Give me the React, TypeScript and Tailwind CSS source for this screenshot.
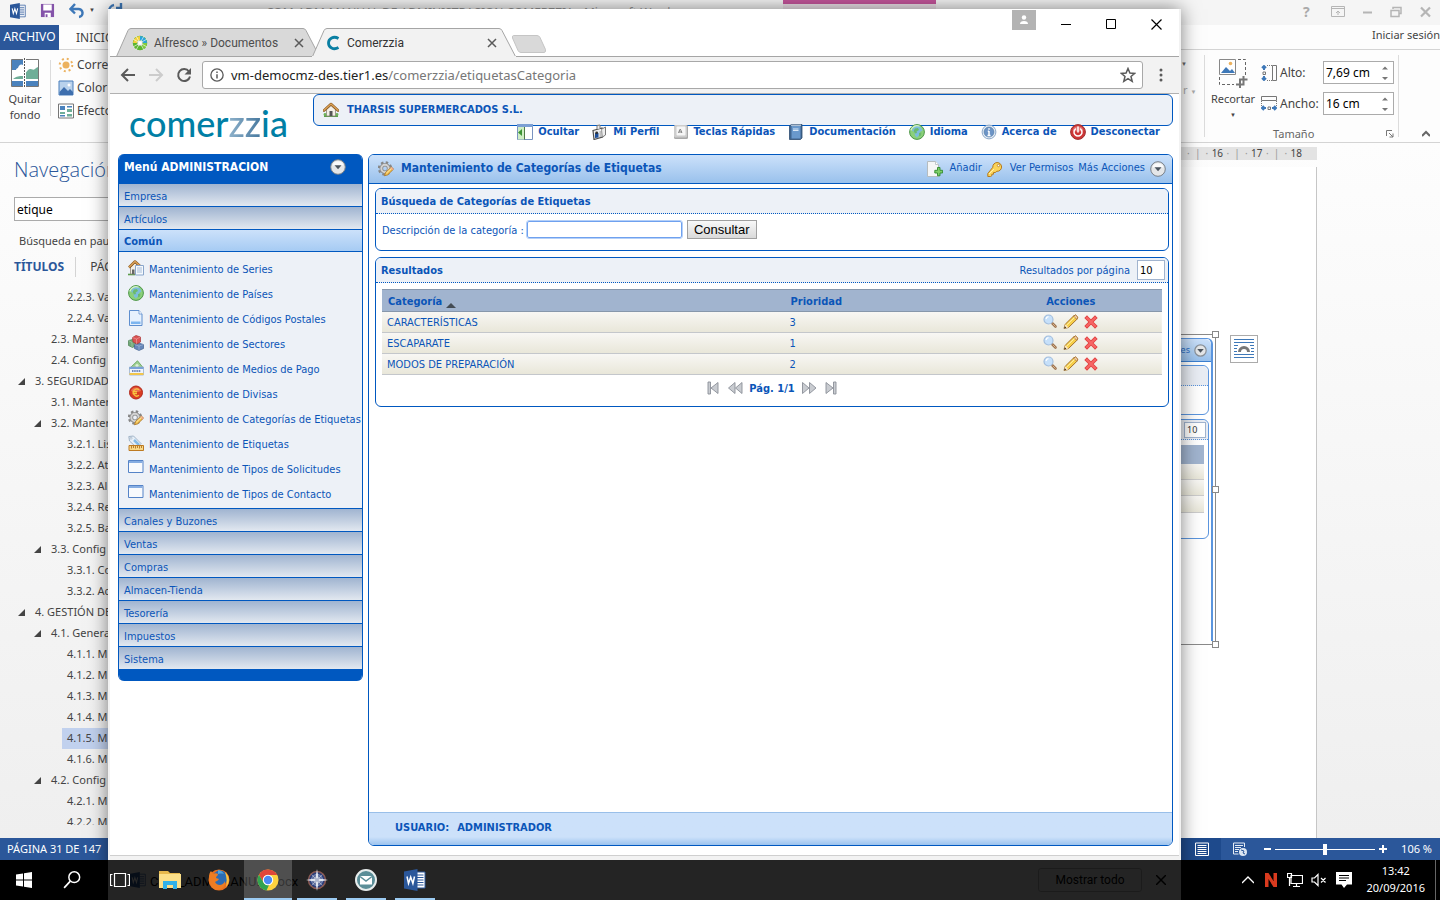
import type { ReactNode } from "react";

type IconProps = { size?: string; box?: string; children: ReactNode };

function Svg({ size = "size-4", box = "0 0 16 16", children }: IconProps) {
  return (
    <svg viewBox={box} className={`${size} shrink-0`} fill="none" aria-hidden="true">
      {children}
    </svg>
  );
}

/* ---------- Application icons ---------- */

const House = () => (
  <Svg>
    <path d="M1 14h14" stroke="#5b9c4a" strokeWidth="2" />
    <path d="M3.500 7.500 8 3.500l4.500 4V14h-9z" fill="#f3efe6" stroke="#8c8478" strokeWidth=".8" />
    <path d="M6.500 9h3v5h-3z" fill="#555" />
    <path d="M1 8.500 8 2l7 6.500" stroke="#8a5a22" strokeWidth="2.600" strokeLinecap="round" strokeLinejoin="round" />
    <path d="M1 8.300 8 2l7 6.300" stroke="#dca258" strokeWidth="1.300" strokeLinecap="round" strokeLinejoin="round" />
    <circle cx="2" cy="12.500" r="1.400" fill="#6fb35c" />
    <circle cx="14" cy="12.500" r="1.400" fill="#6fb35c" />
  </Svg>
);
const HouseDoc = () => (
  <Svg>
    <path d="M0 14.500h7" stroke="#5b9c4a" strokeWidth="1.600" />
    <path d="M2.500 7 7 3l4 4v7h-8.500z" fill="#f3efe6" stroke="#8c8478" strokeWidth=".8" />
    <path d="M4 9.500h2.500V14H4z" fill="#666" />
    <path d="M1 7.500 7 1.500l6.500 6" stroke="#8a5a22" strokeWidth="2.600" strokeLinejoin="round" />
    <path d="M1 7.300 7 1.500l6.500 5.800" stroke="#dca258" strokeWidth="1.300" />
    <path d="M7.500 5.500h8v9.500h-8z" fill="#f6f9fd" stroke="#8aa6cb" />
    <path d="M9 8h5M9 10h5M9 12h5" stroke="#9cb4d4" strokeWidth=".9" />
  </Svg>
);
const Globe = () => (
  <Svg>
    <circle cx="8" cy="8" r="7.400" fill="#8ad07a" stroke="#4d9647" />
    <path d="M5 3c2-1.500 5-1.500 7 .5l1.500 3-2 1-1 3-2.500 3-2-2-.5-3-2.500-2z" fill="#7cbcdc" />
    <path d="M6 4.500 9 4l1 2-2.500 1.500L8 9l-2 .5-1.500-2.500zM10 9l2.500-.5-.5 3-2 1z" fill="#6cba6c" />
    <path d="M2 6a6.300 6.300 0 0 1 8-4" stroke="#d5f1ca" strokeWidth="1.300" strokeLinecap="round" />
  </Svg>
);
const Page = () => (
  <Svg>
    <path d="M1.500.5H11L14 4v11.500H1.500z" fill="#e7f1fd" stroke="#5f8fcf" />
    <path d="M11 .5V4h3" fill="#fff" stroke="#5f8fcf" strokeWidth=".8" />
    <path d="M3 11.500h9.500v2.500H3z" fill="#7db5ef" />
  </Svg>
);
const Cubes = () => (
  <Svg>
    <path d="m.5 5.500 4-1 3 1.500v5l-3 1.500-4-2z" fill="#71a878" stroke="#477c50" strokeWidth=".7" />
    <path d="m6.500 9.500 4-1.500 5 1.500v4L11 15.500l-4.500-2z" fill="#6687ba" stroke="#41608f" strokeWidth=".7" />
    <path d="m4.500 2.500 3.500-2 4.500 1.500v5L9 9 5 7z" fill="#dc5454" stroke="#a93333" strokeWidth=".7" />
    <path d="m4.500 2.500 4 1.500 4-2M8.500 4v5M.5 5.500l3.500 2V12M11 11v4.500M6.500 9.500 11 11l4.500-1.500" stroke="#fff" strokeOpacity=".35" strokeWidth=".8" />
  </Svg>
);
const Payment = () => (
  <Svg>
    <path d="M1 9 9.500.8 15 7.500z" fill="#9fd092" stroke="#5d9f52" strokeWidth=".8" />
    <circle cx="9" cy="5.500" r="1.600" fill="#dcf0d5" />
    <path d="M1.500 7h14v8h-14z" fill="#eef3fb" stroke="#9bb0cd" strokeWidth=".8" />
    <path d="M1.500 7h14v2h-14z" fill="#7ba2d8" />
    <path d="M1.500 13h14v2h-14z" fill="#f2c64c" />
    <path d="M4 11h9" stroke="#4a68a8" strokeWidth="1.500" strokeDasharray="1.500 .7" />
  </Svg>
);
const Euro = () => (
  <Svg>
    <circle cx="8" cy="7.500" r="6.500" fill="#da3c22" stroke="#b2281a" />
    <path d="M3 6a5.300 5.300 0 0 1 10 0c-3 1.500-7 1.500-10 0z" fill="#f08a66" opacity=".7" />
    <path d="M11 4.800A3.500 3.500 0 1 0 11 10.300M4.500 6.700h4.500M4.500 8.500h4.500" stroke="#f8c440" strokeWidth="1.300" />
  </Svg>
);
const GearPencil = () => (
  <Svg>
    <circle cx="7" cy="7.500" r="5.700" stroke="#868686" strokeWidth="3" strokeDasharray="2.300 2.177" />
    <circle cx="7" cy="7.500" r="3.700" stroke="#8c8c8c" strokeWidth="3.600" />
    <circle cx="7" cy="7.500" r="3.700" stroke="#d2d2d2" strokeWidth="2" />
    <path d="m6.500 14.800 1-3.300 6-5.500 2 2.200-6 5.700z" fill="#f4c454" stroke="#a97425" strokeWidth=".8" />
    <path d="m13.500 6 2 2.200-1.200 1-2-2.200z" fill="#f0a08e" />
    <path d="m8.500 12 5-4.700" stroke="#fdeaa8" />
  </Svg>
);
const TagRuler = () => (
  <Svg>
    <path d="M.8 1.500 5.500 1l7.500 7.500-4 4.500L1.500 6z" fill="#e6eff8" stroke="#8fa4bb" strokeWidth=".8" />
    <circle cx="3" cy="3.200" r="1" fill="#fff" stroke="#8fa4bb" strokeWidth=".6" />
    <path d="m6 5 5 5" stroke="#84bbe8" strokeWidth="2.500" />
    <path d="M1 10.500h14.500v5H1z" fill="#f8d888" stroke="#bd7a22" />
    <path d="M3.500 11v2.500M5.500 11v2M7.500 11v2.500M9.500 11v2M11.500 11v2.500M13.500 11v2" stroke="#a8681a" strokeWidth=".8" />
  </Svg>
);
const WindowIcon = () => (
  <Svg>
    <path d="M.5.500h14.500v12H.5z" fill="#f8fafd" stroke="#5583c7" />
    <path d="M1 1h13.500v2H1z" fill="#86ade2" />
  </Svg>
);
const HidePane = () => (
  <Svg>
    <path d="M.5.5h15v15H.5z" fill="#fff" stroke="#7a93c0" />
    <path d="M0 0h16v3H0z" fill="#7b9fd4" />
    <path d="M1 3h6v12.500H1z" fill="#cfeec5" />
    <path d="M7.500 3v12.500" stroke="#4f7a46" />
    <path d="M1 8.500 5 5v7z" fill="#3c9435" />
  </Svg>
);
const Profile = () => (
  <Svg>
    <path d="M1 6.500 10 4l.5 9L2 15.500z" fill="#f1f1f1" stroke="#4e4e4e" strokeWidth="1.200" />
    <path d="M3 9h3.500v4.500L3 14z" fill="#1d4f9a" />
    <circle cx="4.700" cy="8.800" r="1.400" fill="#333" />
    <path d="M7.500 8h2M7.500 10h2M7.500 12h2" stroke="#777" strokeWidth=".8" />
    <path d="M5 5V1.500L8 1v3.500M10 5l3.500-2v8l-3 2" fill="#eee" stroke="#777" />
  </Svg>
);
const KeyCap = () => (
  <Svg>
    <rect x="1" y="1" width="14" height="14" rx="1.500" fill="#a9a9a9" />
    <rect x="1" y="1" width="13" height="12.500" rx="1.500" fill="#cdcdcd" />
    <rect x="3.500" y="2.500" width="9" height="9" rx="1" fill="#f6f6f6" />
    <path d="M5.500 9 6.800 5.500h.8L8.900 9M6 8h2.500" stroke="#666" strokeWidth=".8" />
  </Svg>
);
const Book = () => (
  <Svg>
    <path d="M1.500 2 3 .5h11v13.500l-1.500 1.500h-11z" fill="#3f658f" stroke="#2f4d70" strokeWidth=".8" />
    <path d="M3.500 2h9v12.500h-9z" fill="#6a99cc" />
    <path d="M5 5h5.500M5 6.500h5.500" stroke="#dce9f7" />
    <path d="M3 1.200h10" stroke="#dfe9f4" />
  </Svg>
);
const Info = () => (
  <Svg>
    <circle cx="8" cy="8" r="6.900" fill="#e8eff7" stroke="#8ba7c8" />
    <circle cx="8" cy="8" r="5" fill="#6c94c6" stroke="#51799f" strokeWidth=".6" />
    <path d="M8 4.300v1.500M8 7v4.500M6.800 7.300H8M6.500 11.500h3" stroke="#fff" strokeWidth="1.500" />
  </Svg>
);
const Power = () => (
  <Svg>
    <circle cx="8" cy="8" r="7.400" fill="#ce3636" stroke="#9f3030" />
    <path d="M2.500 6.500a5.700 5.700 0 0 1 11 0c-3 1.500-8 1.500-11 0z" fill="#e98a8a" opacity=".7" />
    <path d="M5.500 5a4 4 0 1 0 5 0M8 3v5" stroke="#fff" strokeWidth="1.500" strokeLinecap="round" />
  </Svg>
);
const AddPage = () => (
  <Svg>
    <path d="M.5.500h8L11.500 3.500v12H.5z" fill="#f5f6f6" stroke="#b5bcbf" />
    <path d="M8.500.5v3h3" fill="#fff" stroke="#b5bcbf" strokeWidth=".8" />
    <path d="M10.500 6.500h2.500v2.800h2.600v2.700H13v2.800h-2.500V12H7.800V9.300h2.700z" fill="#7ecf68" stroke="#2f8a2e" strokeWidth=".9" />
  </Svg>
);
const Key = () => (
  <Svg>
    <path d="M5.800 6.300a4.400 4.400 0 1 1 4 4L8.300 11.500H6.500v1.700H4.800v1.600L3.500 15.500H.8V12.500z" fill="#fbd45a" stroke="#b47a1e" strokeLinejoin="round" />
    <circle cx="11.500" cy="4.500" r="1.200" fill="#fff" stroke="#b47a1e" strokeWidth=".8" />
    <path d="M2 13 7 8" stroke="#fff0b0" />
  </Svg>
);
const DropCircle = () => (
  <Svg>
    <circle cx="8" cy="8" r="7.300" fill="#e4e6e8" stroke="#777f88" />
    <path d="M2.500 6.500a5.700 5.700 0 0 1 11 0z" fill="#fff" opacity=".8" />
    <path d="M4.500 6.200h7L8 10.300z" fill="#4b545e" />
  </Svg>
);
const Magnifier = () => (
  <Svg>
    <path d="m9.500 9.500 3 3" stroke="#9b7350" strokeWidth="2.600" strokeLinecap="round" />
    <path d="m10 10 2.300 2.300" stroke="#dcb58c" strokeLinecap="round" />
    <circle cx="5.500" cy="5.500" r="4.500" fill="#c6e0fa" stroke="#a3bedd" strokeWidth="1.200" />
    <path d="M3 5A3 3 0 0 1 5.500 2.700" stroke="#fff" strokeWidth="1.200" />
  </Svg>
);
const Pencil = () => (
  <Svg>
    <path d="m1 14.500 1.200-4.200L10.500 2l2-1 2.300 2.200-1 2.200L5.500 13.500z" fill="#f6cf4a" stroke="#9b6722" strokeWidth=".9" strokeLinejoin="round" />
    <path d="m10.500 2 2-1 2.300 2.200-1 2.200z" fill="#f6cfae" stroke="#9b6722" strokeWidth=".7" />
    <path d="m1 14.500 1.200-4.200L5.500 13.500z" fill="#fbe6c4" />
    <path d="m1 14.500.8-2.200 1.500 1.500z" fill="#3b2b16" />
    <path d="m3.500 11.200 8-7.800" stroke="#fff3b4" />
  </Svg>
);
const Cross = () => (
  <Svg>
    <path d="m4 4 8 8M12 4l-8 8" stroke="#e04040" strokeWidth="3.800" strokeLinecap="square" />
    <path d="m4 4 8 8M12 4l-8 8" stroke="#f76565" strokeWidth="2.200" strokeLinecap="square" />
  </Svg>
);
const pagePaths = {
  first: "M3 2h2.500v12H3zM13 2.500v11L6 8z",
  prev: "M8 2.500v11L1.500 8zM15 2.500v11L8.500 8z",
  next: "M1.500 2.500v11L8 8zM8.500 2.500v11L15 8z",
  last: "M10.500 2H13v12h-2.500zM3 2.500v11L10 8z",
};
const PageArrow = ({ kind }: { kind: keyof typeof pagePaths }) => (
  <Svg>
    <path d={pagePaths[kind]} fill="#c9ccd1" stroke="#8a8f97" strokeWidth=".9" />
  </Svg>
);

/* ---------- Word window ---------- */

const WordLogo = ({ size }: { size: string }) => (
  <Svg size={size} box="0 0 22 22">
    <path d="M12 3h9v16h-9z" fill="#fff" stroke="#2b579a" />
    <path d="M13 6h6.500M13 8.500h6.500M13 11h6.500M13 13.500h6.500M13 16h6.500" stroke="#2b579a" />
    <path d="M0 2.500 13.500 0v22L0 19.500z" fill="#2b579a" />
    <path d="m3 7.500 1.500 7L6.700 8l2.200 6.500 1.600-7" stroke="#fff" strokeWidth="1.500" />
  </Svg>
);

type OutlineNode = { level: 1 | 2 | 3; text: string; open?: boolean; current?: boolean };
const outline: OutlineNode[] = [
  { level: 3, text: "2.2.3. Va" },
  { level: 3, text: "2.2.4. Va" },
  { level: 2, text: "2.3. Manter" },
  { level: 2, text: "2.4. Config" },
  { level: 1, text: "3. SEGURIDAD", open: true },
  { level: 2, text: "3.1. Manter" },
  { level: 2, text: "3.2. Manter", open: true },
  { level: 3, text: "3.2.1. Lis" },
  { level: 3, text: "3.2.2. At" },
  { level: 3, text: "3.2.3. Al" },
  { level: 3, text: "3.2.4. Re" },
  { level: 3, text: "3.2.5. Ba" },
  { level: 2, text: "3.3. Config", open: true },
  { level: 3, text: "3.3.1. Co" },
  { level: 3, text: "3.3.2. Ac" },
  { level: 1, text: "4. GESTIÓN DE", open: true },
  { level: 2, text: "4.1. Genera", open: true },
  { level: 3, text: "4.1.1. M" },
  { level: 3, text: "4.1.2. M" },
  { level: 3, text: "4.1.3. M" },
  { level: 3, text: "4.1.4. M" },
  { level: 3, text: "4.1.5. M", current: true },
  { level: 3, text: "4.1.6. M" },
  { level: 2, text: "4.2. Config", open: true },
  { level: 3, text: "4.2.1. M" },
  { level: 3, text: "4.2.2. M" },
];
const indent = { 1: "ml-4", 2: "ml-8", 3: "ml-12" };

function SizeField({ id, label, value, icon }: { id: string; label: string; value: string; icon: ReactNode }) {
  return (
    <div className="flex h-[23px] items-center">
      {icon}
      <label htmlFor={id} className="ml-[3px] w-[43px]">{label}</label>
      <div className="flex h-[23px] w-[71px] items-center border border-[#ababab] bg-white pr-1">
        <input id={id} defaultValue={value} className="w-full min-w-0 bg-transparent pl-[2px] text-black outline-none" />
        <Svg size="h-4 w-2" box="0 0 8 16">
          <path d="M1 4.500 4 1.500l3 3zM1 12l3 3 3-3z" fill="#777" />
        </Svg>
      </div>
    </div>
  );
}

const RulerTicks = () => <span className="w-7 text-center whitespace-nowrap text-[#999]">·&nbsp;&nbsp;|&nbsp;&nbsp;·</span>;

function WordWindow() {
  return (
    <div className="flex h-[calc(100%-40px)] flex-col overflow-hidden bg-[#fdfdfd] text-[11px] text-[#444]">
      <div className="relative flex h-[25px] shrink-0 items-center justify-between bg-[#f5f5f5] pr-[7px] pb-1 pl-[10px]">
        <div className="flex items-center">
          <WordLogo size="size-4" />
          <Svg size="ml-[14px] h-[15px] w-[15px]">
            <path d="M1 1h14v14H1z" fill="#8453a9" />
            <path d="M3.500 1.500h9V8h-9zM5 10.500h6.500v4.500H5z" fill="#fff" />
            <path d="M6 12h2v3H6z" fill="#8453a9" />
          </Svg>
          <Svg size="ml-[14px] size-4">
            <path d="M2 6h7a4 4 0 0 1 1 8M6 1 1.500 6 6 10.500" stroke="#3e78b8" strokeWidth="2.400" />
          </Svg>
          <span className="ml-[4px] text-[6px]">▼</span>
          <Svg size="ml-[12px] size-4">
            <path d="M7 2a6 6 0 1 0 7 7M9 5h5V0" stroke="#3e78b8" strokeWidth="2.400" />
          </Svg>
        </div>
        <p className="absolute top-1 left-[266px] text-[12px] text-[#999]">COM-ADM-MANUAL DE ADMINISTRACION COMERZZIA - Microsoft Word</p>
        <div className="absolute top-0 left-[783px] h-[25px] w-[153px] border-t-4 border-[#c4549b] bg-[#eee2ea]" />
        <div className="flex items-center gap-[13px] pt-[2px] text-[#aaa]">
          <b className="w-[14px] text-[14px] leading-4">?</b>
          <Svg><path d="M1.500 2.500h13v10h-13zM1.500 4.500h13M8 11V7M6 9l2-2 2 2" stroke="#b5b5b5" /></Svg>
          <Svg><path d="M4 8.500h9" stroke="#b5b5b5" strokeWidth="2" /></Svg>
          <Svg><path d="M5 5V3.500h8v6h-2M3 6.500h8v6H3z" stroke="#b5b5b5" strokeWidth="1.500" /></Svg>
          <Svg><path d="m4 3.500 9 9M13 3.500l-9 9" stroke="#b5b5b5" strokeWidth="2.200" /></Svg>
        </div>
      </div>
      <div className="flex h-[25px] shrink-0 items-center border-b border-[#d4d4d4]">
        <button className="flex h-[25px] w-[59px] items-center justify-center bg-[#2b579a] text-[12px] text-white">ARCHIVO</button>
        <button className="ml-[17px] pt-px text-[12px]">INICIO</button>
        <a href="#sesion" className="ml-auto pb-1 text-[11px] whitespace-nowrap">Iniciar sesión</a>
      </div>
      <div className="flex h-[93px] shrink-0 justify-between border-b border-[#d4d4d4]">
        <div className="flex">
          <button className="flex w-[50px] flex-col items-center pt-[8px] text-[11px] leading-4">
            <Svg size="size-[30px] mb-[3px]" box="0 0 30 30">
              <path d="M1.500 1.500h27v27h-27z" fill="#fff" stroke="#777" />
              <path d="M2 2h12v6c-3-3-5-1-6 2-1 0-2 1-2 2H2zM2 23h26v5H2z" fill="#4a82bd" />
              <path d="M3 21c4-3 6-3 10-3l5-6c3-3 5 2 8-2l2-1v12z" fill="#6fae98" />
              <path d="M14.500 0v30" stroke="#fff" strokeWidth="3" />
              <path d="M14.500 0v30" stroke="#555" strokeDasharray="2 1" />
            </Svg>
            Quitar
            <span>fondo</span>
          </button>
          <div className="mt-[10px] h-[56px] w-px bg-[#dcdcdc]" />
          <div className="flex flex-col gap-[7px] pt-[7px] pl-[7px] text-[12px] leading-4">
            <button className="flex items-center gap-[3px]">
              <Svg>
                <circle cx="8" cy="8" r="3.500" fill="#ecb25f" />
                <circle cx="8" cy="8" r="6.300" stroke="#ecb25f" strokeWidth="2" strokeDasharray="2 2.950" />
              </Svg>
              Correc
            </button>
            <button className="flex items-center gap-[3px]">
              <Svg><path d="M1 1h14v14H1z" fill="#b9d2ec" stroke="#4a7ebb" /><path d="M1.500 12 6 7l4 4 2-2 3 3v3H1.500z" fill="#3e6fae" /><circle cx="11" cy="5" r="1.500" fill="#fff" /></Svg>
              Color
            </button>
            <button className="flex items-center gap-[3px]">
              <Svg><path d="M.5 1h15v14H.5z" fill="#fff" stroke="#777" /><path d="M2 3h5v4H2zM9 3h5v1.500H9zM2 12h5v1.500H2z" fill="#4a82bd" /><path d="M9 6h5v3H9zM2 9h5v2H2zM9 11h5v2.500H9z" fill="#6fae98" /></Svg>
              Efectos
            </button>
          </div>
        </div>
        <div className="flex">
          <div className="flex w-[24px] flex-col gap-[10px] pt-[6px] text-[11px] leading-4 text-[#aaa]">
            <span className="pl-px text-[6px] text-[#666]">▼</span>
            <span className="pl-[3px] whitespace-nowrap">r <span className="text-[6px]">▼</span></span>
          </div>
          <div className="my-[5px] w-px bg-[#dcdcdc]" />
          <button className="flex w-[56px] flex-col items-center pt-[7px] text-[11px] leading-4">
            <Svg size="size-8 mb-[2px]" box="0 0 32 32">
              <path d="M2.500 2.500h16v15h-16z" fill="#fff" stroke="#888" />
              <path d="m4 16 5-6 4 4 2-2 3 4z" fill="#3e78b8" />
              <circle cx="13.500" cy="6.500" r="1.800" fill="#ecb25f" />
              <path d="M21 2.500h7.500V18M2.500 20v7.500H17" stroke="#666" strokeDasharray="3 2" />
              <path d="M26.500 19v8.500H19M30.500 22.500h-7.500V31" stroke="#777" strokeWidth="2" />
            </Svg>
            Recortar
            <span className="text-[6px] leading-4">▼</span>
          </button>
          <div className="flex w-[137px] flex-col text-[12px]">
            <div className="flex flex-col gap-2 pt-[11px]">
              <SizeField id="alto" label="Alto:" value="7,69 cm" icon={<Svg><path d="M3 5V1M1 3l2-2 2 2M3 11v4M1 13l2 2 2-2" stroke="#3e78b8" strokeWidth="2" /><path d="M2 7h2.500v2.500H2zM11.500.5h4v15h-4z" stroke="#777" /><path d="M6 .5h5M6 15.500h5" stroke="#777" strokeDasharray="1 1" /></Svg>} />
              <SizeField id="ancho" label="Ancho:" value="16 cm" icon={<Svg><path d="M5 12H1M3 10l-2 2 2 2M11 12h4M13 10l2 2-2 2" stroke="#3e78b8" strokeWidth="2" /><path d="M7 11h2.500v2.500H7zM.5.500h15v4H.5z" stroke="#777" /><path d="M.5 5v5M15.500 5v5" stroke="#777" strokeDasharray="1 1" /></Svg>} />
            </div>
            <div className="mt-[11px] flex items-center pl-3 text-[11px] leading-4 text-[#666]">
              Tamaño
              <Svg size="ml-auto mr-1 size-2" box="0 0 8 8"><path d="M.5 6V.5H6M3 3l4 4M7 3.500V7H3.500" stroke="#777" /></Svg>
            </div>
          </div>
          <div className="my-[5px] w-px bg-[#dcdcdc]" />
          <div className="flex w-[41px] items-end justify-center pb-1 pl-3">
            <Svg size="size-2" box="0 0 8 8"><path d="m0 6 4-4 4 4" stroke="#666" strokeWidth="2" /></Svg>
          </div>
        </div>
      </div>
      <div className="flex min-h-0 flex-1 bg-linear-to-b from-[#fdfdfd] to-[#efefef]">
        <div className="flex w-[130px] shrink-0 flex-col pb-[13px] pl-[14px]">
          <h2 className="mt-[11px] font-['Open_Sans','Noto_Sans',sans-serif] text-[20px] leading-8 font-light text-[#2b579a]">Navegación</h2>
          <input aria-label="Buscar en el documento" defaultValue="etique" className="mt-[11px] h-6 w-full shrink-0 border border-[#ababab] bg-white px-[2px] text-[12px] text-black" />
          <p className="mt-3 pl-[5px] leading-4 whitespace-nowrap">Búsqueda en pau</p>
          <div className="mt-[7px] flex h-[22px] shrink-0 items-center text-[12px]">
            <b className="text-[#2b579a]">TÍTULOS</b>
            <span className="ml-[11px] h-5 w-px bg-[#d4d4d4]" />
            <span className="ml-[14px]">PÁG</span>
          </div>
          <ul className="mt-[9px] min-h-0 flex-1 overflow-hidden">
            {outline.map((n) => (
              <li key={n.text} className={`relative flex h-[21px] items-center pl-[5px] text-[11px] whitespace-nowrap ${indent[n.level]} ${n.current ? "bg-[#c1d1ee]" : ""}`}>
                {n.open && (
                  <Svg size="absolute -left-3 size-2" box="0 0 8 8"><path d="M7 0v7H0z" fill="#444" /></Svg>
                )}
                {n.text}
              </li>
            ))}
          </ul>
        </div>
        <div className="flex min-w-0 flex-1 flex-col pr-[123px]">
          <div className="mt-1 flex h-[13px] shrink-0 items-center justify-end bg-[#e3e3e3] pr-[15px] text-[10px]">
            <RulerTicks />16<RulerTicks />17<RulerTicks />18
          </div>
          <div className="mt-[7px] flex min-h-0 flex-1 justify-end border-r border-[#c6c6c6] bg-white">
            <div className="relative mt-[167px] mr-[100px] h-[311px] w-[120px] border border-[#8a8a8a]">
              <div className="mr-[2px] mt-[3px] flex h-[303px] flex-col rounded-tr-md border-t border-r-2 border-[#5b95de]">
                <div className="flex h-[23px] items-center justify-end gap-1 rounded-tr-md border-b border-[#3b7fd0] bg-linear-to-b from-[#cce1fa] to-[#99c1ec] pr-1 text-[9px] text-[#2f6fc4]">
                  nes
                  <Svg size="size-[13px]"><circle cx="8" cy="8" r="7" fill="#e4e6e8" stroke="#8a9199" strokeWidth="1.500" /><path d="M4 6.200h8L8 10.800z" fill="#4b545e" /></Svg>
                </div>
                <div className="mt-[3px] mr-[2px] h-[50px] rounded-r-md border border-[#5b95de]">
                  <div className="h-5 rounded-tr-md border-b border-dotted border-[#5b95de] bg-[#e9edf4]" />
                </div>
                <div className="mt-1 mr-[2px] h-[120px] rounded-r-md border border-[#5b95de]">
                  <div className="flex h-5 items-center justify-end rounded-tr-md border-b border-dotted border-[#5b95de] bg-[#e9edf4] pr-[2px]">
                    <span className="h-4 w-[22px] border border-[#a1b4cf] bg-white pl-[2px] text-[9px] leading-[14px] text-[#333]">10</span>
                  </div>
                  <div className="mt-[5px] mr-1">
                    <div className="h-[19px] bg-[#a1b4cf]" />
                    <div className="h-4 border-b border-[#ccc] bg-linear-to-b from-[#f8f7f4] to-[#e8e6d8]" />
                    <div className="h-4 border-b border-[#ccc] bg-linear-to-b from-[#f8f7f4] to-[#e8e6d8]" />
                    <div className="h-[17px] border-b border-[#ccc] bg-linear-to-b from-[#f8f7f4] to-[#e8e6d8]" />
                  </div>
                </div>
              </div>
              <span className="absolute -top-1 -right-1 size-[7px] border border-[#888] bg-white" />
              <span className="absolute top-[151px] -right-1 size-[7px] border border-[#888] bg-white" />
              <span className="absolute -right-1 -bottom-1 size-[7px] border border-[#888] bg-white" />
              <button aria-label="Opciones de diseño" className="absolute top-0 -right-[43px] flex size-7 items-center justify-center border border-[#ababab] bg-white">
                <Svg size="size-5" box="0 0 20 20">
                  <path d="M0 .5h20M0 3.500h20M0 15.500h20M0 18.500h20M0 6.500h4M16 6.500h4M0 9.500h3M17 9.500h3M0 12.500h3M17 12.500h3" stroke="#3e78b8" />
                  <path d="M5.500 13a4.500 4.500 0 0 1 9 0" stroke="#777" strokeWidth="3" />
                </Svg>
              </button>
            </div>
          </div>
        </div>
      </div>
      <div className="flex h-[22px] shrink-0 items-center bg-[#2b579a] pl-[7px] text-white">
        <span>PÁGINA 31 DE 147</span>
        <div className="ml-auto flex h-full w-[260px] items-center">
          <span className="flex h-full w-[41px] items-center justify-center bg-[#1e4a8c] pl-[2px]">
            <Svg><path d="M1.500 2h13v12.500h-13zM3.500 4.500h9M3.500 6.500h9M3.500 8.500h9M3.500 10.500h9M3.500 12.500h9" stroke="#fff" /></Svg>
          </span>
          <span className="ml-[11px]">
            <Svg><path d="M12.500 6V2h-11v11h5M3 4.500h8M3 6.500h6M3 8.500h4M3 10.500h3" stroke="#e5ecf5" /><circle cx="11" cy="11" r="4" fill="#dce6f2" /><path d="m9 9 3 1-1 2 2 1" stroke="#2b579a" /></Svg>
          </span>
          <span className="ml-4 h-[2px] w-[7px] bg-white" />
          <div className="relative mx-1 flex h-3 w-[100px] items-center">
            <span className="absolute inset-x-0 h-px bg-white" />
            <input type="range" aria-label="Zoom" defaultValue="50" className="relative w-full appearance-none bg-transparent [&::-webkit-slider-thumb]:h-[11px] [&::-webkit-slider-thumb]:w-1 [&::-webkit-slider-thumb]:appearance-none [&::-webkit-slider-thumb]:bg-white" />
          </div>
          <Svg size="size-2" box="0 0 8 8"><path d="M0 4h8M4 0v8" stroke="#fff" strokeWidth="2" /></Svg>
          <span className="ml-auto pr-2">106 %</span>
        </div>
      </div>
    </div>
  );
}

/* ---------- Browser ---------- */

function TabShape({ active }: { active?: boolean }) {
  return (
    <svg viewBox="0 0 204 29" className="absolute inset-0 h-[29px] w-full" preserveAspectRatio="none" aria-hidden="true">
      <path d="M.5 28.500 12 2.500Q13 .5 15 .5H187Q189 .5 190 2.500L203.500 28.500" fill={active ? "#f2f2f2" : "#d9d9d9"} stroke="#a5a5a5" />
      <path d="M0 28.500h204" stroke={active ? "#f2f2f2" : "#a5a5a5"} />
    </svg>
  );
}

const TabClose = () => (
  <Svg size="size-[10px]" box="0 0 10 10"><path d="m1 1 8 8M9 1 1 9" stroke="#5a5a5a" strokeWidth="1.500" /></Svg>
);

function BrowserTop() {
  return (
    <>
      <div className="flex h-12 shrink-0 justify-between border-b border-[#a5a5a5] bg-white">
        <div className="-mb-px flex items-end pl-[6px] font-['Roboto',sans-serif] text-[12px] text-[#4d4d4d]">
          <button className="relative flex h-[29px] w-[204px] items-center pr-[16px] pl-4">
            <TabShape />
            <span className="relative flex w-full items-center">
              <Svg>
                <circle cx="8" cy="8" r="5" stroke="#5cb531" strokeWidth="4.500" />
                <path d="M3 8a5 5 0 0 1 5-5" stroke="#f4d23c" strokeWidth="4" />
                <path d="M8 3a5 5 0 0 1 5 5" stroke="#2aa4dc" strokeWidth="4" />
                <path d="M13 8a5 5 0 0 1-2 4" stroke="#86cc3c" strokeWidth="4" />
                <path d="m1 4 14 8M4 1l8 14M12 1 4 15M15 4 1 12" stroke="#fff" strokeWidth=".6" />
                <circle cx="8" cy="8" r="1.800" fill="#fff" />
              </Svg>
              <span className="ml-[6px]">Alfresco » Documentos</span>
              <span className="ml-auto"><TabClose /></span>
            </span>
          </button>
          <button className="relative -ml-2 flex h-[29px] w-[204px] items-center pr-[19px] pl-[14px] text-[#333]">
            <TabShape active />
            <span className="relative flex w-full items-center">
              <Svg><path d="M12.500 3.500C7.500.5 2.500 3.500 2.500 8s5 7.500 10 4.500" stroke="#0a7fa3" strokeWidth="2.800" /></Svg>
              <span className="ml-[5px]">Comerzzia</span>
              <span className="ml-auto"><TabClose /></span>
            </span>
          </button>
          <button aria-label="Nueva pestaña" className="mb-1 -ml-[5px]">
            <Svg size="h-[18px] w-9" box="0 0 36 18"><path d="M2.500.5H26Q28 .5 29 2.500l5.500 12Q35 17.500 33 17.500H10Q8 17.500 7 15.500L1.500 3Q1 .5 2.500.5z" fill="#d9d9d9" stroke="#c5c5c5" /></Svg>
          </button>
        </div>
        <div className="flex items-start">
          <button aria-label="Usuario" className="mt-px mr-[7px] flex h-5 w-6 items-center justify-center bg-[#b3b3b3]">
            <Svg size="size-[10px]" box="0 0 10 10"><circle cx="5" cy="2.500" r="2.200" fill="#fff" /><path d="M1 9q0-3 4-3t4 3z" fill="#fff" /></Svg>
          </button>
          <button aria-label="Minimizar" className="flex h-[30px] w-[45px] items-center justify-center"><Svg size="size-[10px]" box="0 0 10 10"><path d="M0 5.500h10" stroke="#000" /></Svg></button>
          <button aria-label="Maximizar" className="flex h-[30px] w-[46px] items-center justify-center"><Svg size="size-[10px]" box="0 0 10 10"><path d="M.5.500h9v9h-9z" stroke="#000" /></Svg></button>
          <button aria-label="Cerrar" className="flex h-[30px] w-[45px] items-center justify-center"><Svg size="size-[11px]" box="0 0 11 11"><path d="m.5.500 10 10M10.500.500l-10 10" stroke="#000" strokeWidth="1.200" /></Svg></button>
        </div>
      </div>
      <div className="flex h-[37px] shrink-0 items-center border-b border-[#b1b1b1] bg-[#f2f2f2] pr-[10px] pl-[10px]">
        <Svg size="size-4"><path d="M15 8H2M8 2 2 8l6 6" stroke="#5a5a5a" strokeWidth="2" /></Svg>
        <Svg size="ml-3 size-4"><path d="M1 8h13M8 2l6 6-6 6" stroke="#ccc" strokeWidth="2" /></Svg>
        <Svg size="ml-3 size-4"><path d="M13 4.500a6 6 0 1 0 1 5" stroke="#5a5a5a" strokeWidth="2" /><path d="M15 1v6.500H8.500z" fill="#5a5a5a" /></Svg>
        <div className="ml-[10px] flex h-7 flex-1 items-center rounded-[3px] border border-[#a8a8a8] bg-white pr-[6px] pl-[7px]">
          <Svg size="size-[14px]"><circle cx="8" cy="8" r="7" stroke="#5a5a5a" strokeWidth="1.500" /><path d="M8 4v1.800M8 7v5" stroke="#5a5a5a" strokeWidth="1.700" /></Svg>
          <span className="ml-[7px] pt-px text-[13px] text-[#777]"><span className="text-[#222]">vm-democmz-des.tier1.es</span>/comerzzia/etiquetasCategoria</span>
          <span className="ml-auto"><Svg><path d="m8 1.500 1.900 4.500 4.800.4-3.700 3.100 1.200 4.800L8 11.700l-4.200 2.600L5 9.500 1.300 6.400 6.100 6z" stroke="#5a5a5a" strokeWidth="1.500" /></Svg></span>
        </div>
        <Svg size="ml-[10px] size-4"><circle cx="8" cy="3" r="1.500" fill="#5a5a5a" /><circle cx="8" cy="8" r="1.500" fill="#5a5a5a" /><circle cx="8" cy="13" r="1.500" fill="#5a5a5a" /></Svg>
      </div>
    </>
  );
}

/* ---------- Comerzzia page ---------- */

const topLinks: [string, ReactNode][] = [
  ["Ocultar", <HidePane />],
  ["Mi Perfil", <Profile />],
  ["Teclas Rápidas", <KeyCap />],
  ["Documentación", <Book />],
  ["Idioma", <Globe />],
  ["Acerca de", <Info />],
  ["Desconectar", <Power />],
];

const comunItems: [string, ReactNode][] = [
  ["Mantenimiento de Series", <HouseDoc />],
  ["Mantenimiento de Países", <Globe />],
  ["Mantenimiento de Códigos Postales", <Page />],
  ["Mantenimiento de Sectores", <Cubes />],
  ["Mantenimiento de Medios de Pago", <Payment />],
  ["Mantenimiento de Divisas", <Euro />],
  ["Mantenimiento de Categorías de Etiquetas", <GearPencil />],
  ["Mantenimiento de Etiquetas", <TagRuler />],
  ["Mantenimiento de Tipos de Solicitudes", <WindowIcon />],
  ["Mantenimiento de Tipos de Contacto", <WindowIcon />],
];

const rows = [
  { name: "CARACTERÍSTICAS", priority: 3 },
  { name: "ESCAPARATE", priority: 1 },
  { name: "MODOS DE PREPARACIÓN", priority: 2 },
];

function MenuEntry({ label }: { label: string }) {
  return (
    <button className="flex h-[23px] w-full items-center border-b border-[#0058c0] bg-linear-to-b from-[#a0b4d0] to-[#e2e8f0] px-[5px] pt-1">
      {label}
    </button>
  );
}

function Sidebar() {
  return (
    <nav className="flex w-[245px] shrink-0 flex-col self-start overflow-hidden rounded-md border-x border-[#0058c0] bg-[#edf1f7]">
      <div className="flex h-[30px] items-center justify-between bg-[#0058c0] pr-4 pb-1 pl-[5px]">
        <h2 className="text-[12px] font-bold text-white">Menú ADMINISTRACION</h2>
        <button aria-label="Opciones del menú"><DropCircle /></button>
      </div>
      {["Empresa", "Artículos"].map((l) => <MenuEntry key={l} label={l} />)}
      <button className="flex h-[22px] items-center border-b border-[#0058c0] bg-linear-to-b from-[#cce1fa] to-[#a6cbf3] px-[5px] pt-1 font-bold">Común</button>
      <ul className="border-b border-[#0058c0] pt-1 pb-[2px]">
        {comunItems.map(([label, icon]) => (
          <li key={label} className="h-[25px]">
            <a href="#menu" className="flex h-full items-center gap-[5px] pb-px pl-[9px] whitespace-nowrap">
              {icon}
              <span className="pt-1">{label}</span>
            </a>
          </li>
        ))}
      </ul>
      {["Canales y Buzones", "Ventas", "Compras", "Almacen-Tienda", "Tesorería", "Impuestos", "Sistema"].map((l) => (
        <MenuEntry key={l} label={l} />
      ))}
      <div className="h-[11px] bg-[#0058c0]" />
    </nav>
  );
}

function ResultsTable() {
  return (
    <table className="w-full table-fixed border-separate border-spacing-0 text-left">
      <thead className="bg-[#a1b4cf]">
        <tr className="h-[23px]">
          <th className="w-[52%] border-y border-[#8797ab] pt-[3px] pl-[6px]">
            Categoría
            <Svg size="ml-1 inline h-[5px] w-[10px] align-text-bottom" box="0 0 10 5"><path d="M0 5 5 0l5 5z" fill="#444c55" /></Svg>
          </th>
          <th className="w-[32%] border-y border-[#8797ab] pt-[3px] pl-[3px]">Prioridad</th>
          <th className="border-y border-[#8797ab] pt-[3px] pl-[9px]">Acciones</th>
        </tr>
      </thead>
      <tbody>
        {rows.map((r) => (
          <tr key={r.name} className="h-[21px] bg-linear-to-b from-[#f8f7f4] to-[#e8e6d8]">
            <td className="border-b border-[#c4c7cb] pt-[2px] pl-[5px]">{r.name}</td>
            <td className="border-b border-[#c4c7cb] pt-[2px] pl-[2px]">{r.priority}</td>
            <td className="border-b border-[#c4c7cb] pl-[6px]">
              <div className="flex gap-1">
                <button aria-label="Ver"><Magnifier /></button>
                <button aria-label="Editar"><Pencil /></button>
                <button aria-label="Eliminar"><Cross /></button>
              </div>
            </td>
          </tr>
        ))}
      </tbody>
    </table>
  );
}

function MainPanel() {
  return (
    <main className="flex min-w-0 flex-1 flex-col overflow-hidden rounded-md border border-[#0058c0] bg-white">
      <div className="flex h-[29px] shrink-0 items-center border-b border-[#0058c0] bg-linear-to-b from-[#cce1fa] to-[#99c1ec] pr-[6px] pb-px pl-[9px]">
        <GearPencil />
        <h1 className="ml-[7px] pb-px text-[12px] font-bold">Mantenimiento de Categorías de Etiquetas</h1>
        <div className="ml-auto flex items-center gap-[5px]">
          <a href="#nuevo" className="flex items-center gap-[7px]"><AddPage />Añadir</a>
          <a href="#permisos" className="flex items-center gap-[7px]"><Key />Ver Permisos</a>
          <button className="flex items-center gap-[5px]">Más Acciones<DropCircle /></button>
        </div>
      </div>
      <div className="flex flex-1 flex-col gap-[6px] py-1 pr-[3px] pl-[6px]">
        <section className="overflow-hidden rounded-md border border-[#0058c0]">
          <h2 className="flex h-[25px] items-center border-b border-dotted border-[#0058c0] bg-[#edf1f7] pt-[2px] pl-[5px] font-bold">Búsqueda de Categorías de Etiquetas</h2>
          <form className="flex h-9 items-center pb-[5px] pl-[6px]" onSubmit={(e) => e.preventDefault()}>
            <label htmlFor="descripcion" className="pt-[3px]">Descripción de la categoría :</label>
            <input id="descripcion" className="ml-[3px] h-[17px] w-[155px] rounded-[2px] border border-[#6fa1ef] bg-white px-1 outline-1 outline-[#b5d0f8]" />
            <button className="ml-[5px] h-[19px] w-[70px] border border-[#a0a0a0] bg-linear-to-b from-[#f8f8f8] to-[#dadada] font-['Liberation_Sans',sans-serif] text-[13px] leading-4 text-black">Consultar</button>
          </form>
        </section>
        <section className="overflow-hidden rounded-md border border-[#0058c0]">
          <div className="flex h-[25px] items-center justify-between border-b border-dotted border-[#0058c0] bg-[#edf1f7] pr-[3px] pl-[5px]">
            <h2 className="pt-[2px] font-bold">Resultados</h2>
            <div className="flex items-center gap-[7px]">
              <label htmlFor="por-pagina" className="pt-[2px]">Resultados por página</label>
              <input id="por-pagina" defaultValue="10" className="h-5 w-7 border border-[#a1b4cf] bg-white px-[2px] text-black" />
            </div>
          </div>
          <div className="pt-[6px] pr-[6px] pl-[6px]">
            <ResultsTable />
          </div>
          <div className="flex h-[31px] items-center justify-center gap-[6px] pb-[5px] font-bold">
            <button aria-label="Primera página"><PageArrow kind="first" /></button>
            <button aria-label="Página anterior"><PageArrow kind="prev" /></button>
            <span className="pt-[2px]">Pág. 1/1</span>
            <button aria-label="Página siguiente"><PageArrow kind="next" /></button>
            <button aria-label="Última página"><PageArrow kind="last" /></button>
          </div>
        </section>
      </div>
      <div className="flex h-[33px] shrink-0 items-center gap-2 border-t border-[#99bfe9] bg-linear-to-b from-[#cce1fa] from-75% to-[#9cc3ee] pb-[2px] pl-[26px] font-bold">
        <span>USUARIO:</span>
        <span>ADMINISTRADOR</span>
      </div>
    </main>
  );
}

function BrowserWindow() {
  return (
    <div className="absolute top-[9px] right-[259px] bottom-0 left-[108px] flex flex-col border-x-2 border-[#f2f2f2] bg-white shadow-[0_0_18px_rgba(0,0,0,0.5)]">
      <BrowserTop />
      <div className="flex min-h-0 flex-1 flex-col pr-[6px] pb-[9px] pl-2 font-['DejaVu_Sans_Condensed','DejaVu_Sans',sans-serif] text-[11px] text-[#0b55b8]">
        <header className="flex h-[60px] shrink-0">
          <a href="#inicio" className="w-[195px] shrink-0 pt-2 pl-[11px] font-['Lato',sans-serif] text-[36px] leading-[42px] font-medium text-[#007fa5]">
            comer<span className="bg-linear-to-r from-[#8fb2cb] to-[#47799f] bg-clip-text text-transparent">zz</span>ia
          </a>
          <div className="min-w-0 flex-1">
            <div className="flex h-8 items-center gap-2 rounded-md border border-[#0058c0] bg-[#edf1f7] pl-[9px] font-bold">
              <House />
              THARSIS SUPERMERCADOS S.L.
            </div>
            <div className="relative -mt-[2px] flex justify-end gap-[13px] pr-[13px] font-bold">
              {topLinks.map(([label, icon]) => (
                <a key={label} href="#accion" className="flex items-center gap-[5px] whitespace-nowrap leading-4">
                  {icon}
                  {label}
                </a>
              ))}
            </div>
          </div>
        </header>
        <div className="flex min-h-0 flex-1 gap-[5px]">
          <Sidebar />
          <MainPanel />
        </div>
      </div>
      <div className="flex h-[45px] shrink-0 items-center border-t border-[#cfcfcf] bg-[#f2f2f2] pt-1 pr-[13px] pl-[20px] font-['Roboto',sans-serif] text-[13px] text-black">
        <WordLogo size="size-4" />
        <span className="ml-1 pt-1">COM_ADM_MANU....docx</span>
        <button className="ml-auto h-[24px] w-[104px] rounded-[3px] border border-[#b5b5b5] text-[12px]">Mostrar todo</button>
        <button aria-label="Cerrar descargas" className="ml-[14px]"><Svg size="size-[10px]" box="0 0 10 10"><path d="m0 0 10 10M10 0 0 10" stroke="#000" strokeWidth="1.500" /></Svg></button>
      </div>
    </div>
  );
}

/* ---------- Taskbar ---------- */

function TaskButton({ label, running, active, children }: { label: string; running?: boolean; active?: boolean; children: ReactNode }) {
  return (
    <button aria-label={label} className={`flex h-10 w-12 flex-col items-center ${active ? "bg-white/20" : ""}`}>
      <span className="flex h-[38px] items-center pt-[2px]">{children}</span>
      {running && <span className={`h-[2px] bg-[#9ccbf2] ${active ? "w-12" : "w-10"}`} />}
    </button>
  );
}

function Taskbar() {
  return (
    <div className="absolute inset-x-0 bottom-0 flex h-10 items-center justify-between bg-black/85 text-white">
      <div className="flex">
        <TaskButton label="Inicio"><Svg><path d="M0 2.500 7 1.500v6H0zM8 1.300 16 0v7.500H8zM0 8.500h7v6L0 13.500zM8 8.500h8V16l-8-1.300z" fill="#fff" /></Svg></TaskButton>
        <TaskButton label="Buscar"><Svg size="size-[18px]"><circle cx="10" cy="5.500" r="4.800" stroke="#fff" strokeWidth="1.300" /><path d="M6.500 9 1 15" stroke="#fff" strokeWidth="1.500" /></Svg></TaskButton>
        <TaskButton label="Vista de tareas"><Svg size="h-4 w-5" box="0 0 20 16"><path d="M4.500 1.500h11v13h-11zM2.500 2.500h-2v11h2M17.500 2.500h2v11h-2" stroke="#fff" strokeWidth="1.200" /></Svg></TaskButton>
      </div>
      <div className="mr-auto ml-[2px] flex gap-px">
        <TaskButton label="Explorador">
          <Svg size="size-[22px]" box="0 0 22 22"><path d="M0 2h9l2 2h10v14H0z" fill="#e6b84c" /><path d="M0 5h22v14H0z" fill="#fbdf88" /><path d="M4 12h14v8h-4v-4H8v4H4z" fill="#2fb1ea" /></Svg>
        </TaskButton>
        <TaskButton label="Firefox">
          <Svg size="size-[22px]" box="0 0 22 22">
            <circle cx="11" cy="11" r="10.500" fill="#e8701f" />
            <circle cx="12" cy="9" r="7.500" fill="#2c6cb5" />
            <path d="M10 1a8 8 0 0 1 6 4c-4-1-6 0-6 0z" fill="#4ea4dd" />
            <path d="M1 8c0-3 1-5 2-6l2 3c2-1 3-1 5 0 0 2-2 2-2 4l3 1c-1 2-3 2-4 3 2 4 8 4 10-1 1 6-4 9-8 9C5 21 1 16 1 8z" fill="#ee7d22" />
            <path d="M17 3c5 4 5 11 1 15 1-5 1-9-1-15z" fill="#f9c440" />
          </Svg>
        </TaskButton>
        <TaskButton label="Chrome" running active>
          <Svg size="size-[22px]" box="0 0 22 22">
            <circle cx="11" cy="11" r="10.500" fill="#fdd23f" />
            <path d="M1.900 5.700A10.500 10.500 0 0 1 20.300 6H11a5 5 0 0 0-4.400 7.500z" fill="#e0473a" />
            <path d="M1.900 5.700 6.600 13.500A5 5 0 0 0 12 16l-2.500 5.400A10.500 10.500 0 0 1 1.900 5.700z" fill="#31a350" />
            <circle cx="11" cy="11" r="5.200" fill="#fff" />
            <circle cx="11" cy="11" r="4.200" fill="#4a8af4" />
          </Svg>
        </TaskButton>
        <TaskButton label="Brújula" running>
          <Svg size="size-[22px]" box="0 0 22 22">
            <circle cx="11" cy="11" r="8.500" fill="#2c3e78" stroke="#8b5a52" strokeWidth="1.500" />
            <circle cx="11" cy="11" r="5.500" stroke="#8fa0cc" />
            <path d="m11 0 1.700 9.300L22 11l-9.300 1.700L11 22l-1.700-9.300L0 11l9.300-1.700z" fill="#dfe4ee" />
            <path d="m5 5 6 4.500L17 5l-4.500 6 4.500 6-6-4.500L5 17l4.500-6z" fill="#aab3cc" />
          </Svg>
        </TaskButton>
        <TaskButton label="Correo" running>
          <Svg size="size-[22px]" box="0 0 22 22">
            <circle cx="11" cy="11" r="10" fill="#5b8e98" stroke="#e8eded" strokeWidth="2" />
            <path d="M5 7h12v8.500H5z" fill="#fff" />
            <path d="m5 7.500 6 4.500 6-4.500" stroke="#5b8e98" strokeWidth="1.500" />
          </Svg>
        </TaskButton>
        <TaskButton label="Word" running><WordLogo size="size-[22px]" /></TaskButton>
      </div>
      <div className="flex h-full items-center">
        <Svg size="size-3" box="0 0 12 12"><path d="m0 9 6-6 6 6" stroke="#fff" strokeWidth="1.400" /></Svg>
        <Svg size="ml-[11px] h-[14px] w-3" box="0 0 12 14"><path d="M0 14V0h3.500l5 8V0H12v14H8.500l-5-8v8z" fill="#d93a1e" /></Svg>
        <Svg size="ml-[10px] size-4"><path d="M4 3.500h11.500v8H4zM9.500 11.500V14M6 14.500h7M.5 1.500h4v4h-4zM2.500 5.500V14" stroke="#fff" strokeWidth="1.200" /></Svg>
        <Svg size="ml-2 size-4"><path d="M1 6h2.500L7 2.500v11L3.500 10H1zM10 6l4.500 4.500M14.500 6 10 10.500" stroke="#fff" strokeWidth="1.200" /></Svg>
        <Svg size="ml-[9px] size-4"><path d="M0 0h16v12.500h-5L8 16l-2.500-3.500H0z" fill="#fff" /><path d="M3 3.500h10M3 6h10M3 8.500h7" stroke="#000" /></Svg>
        <div className="ml-[14px] pb-[2px] text-center text-[11px] leading-[17px]">
          <p>13:42</p>
          <p>20/09/2016</p>
        </div>
        <span className="mr-1 ml-[10px] h-full w-px bg-[#666]" />
      </div>
    </div>
  );
}

export default function App() {
  return (
    <div className="relative h-screen overflow-hidden bg-black font-['Noto_Sans','Open_Sans',sans-serif]">
      <WordWindow />
      <BrowserWindow />
      <Taskbar />
    </div>
  );
}
